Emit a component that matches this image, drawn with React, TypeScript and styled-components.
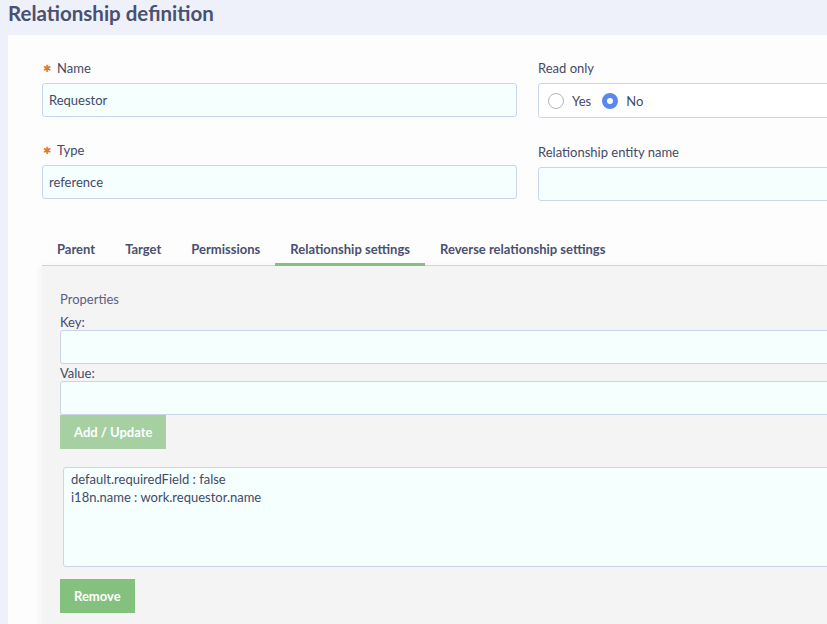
import React from 'react'
import styled, { createGlobalStyle } from 'styled-components'

const GlobalStyle = createGlobalStyle`
  body {
    margin: 0;
    background: #eef1f9;
    font-family: Lato, "Noto Sans", sans-serif;
    color: #434a67;
    overflow: hidden;
  }
`

const tabs = [
  'Parent',
  'Target',
  'Permissions',
  'Relationship settings',
  'Reverse relationship settings',
]

const properties = [
  'default.requiredField : false',
  'i18n.name : work.requestor.name',
]

export default function App() {
  return (
    <>
      <GlobalStyle />
      <Title>Relationship definition</Title>
      <Panel>
        <FormGrid>
          <Field>
            <Label required>Name</Label>
            <Input defaultValue="Requestor" />
          </Field>
          <Field>
            <Label>Read only</Label>
            <RadioGroup>
              <RadioOption>
                <Radio />
                Yes
              </RadioOption>
              <RadioOption>
                <Radio checked />
                No
              </RadioOption>
            </RadioGroup>
          </Field>
          <Field>
            <Label required>Type</Label>
            <Input defaultValue="reference" />
          </Field>
          <Field offset>
            <Label>Relationship entity name</Label>
            <Input />
          </Field>
        </FormGrid>

        <TabBar>
          {tabs.map((t) => (
            <Tab key={t} active={t === 'Relationship settings'}>
              {t}
            </Tab>
          ))}
        </TabBar>

        <TabContent>
          <SectionTitle>Properties</SectionTitle>
          <SmallLabel>Key:</SmallLabel>
          <WideInput />
          <SmallLabel>Value:</SmallLabel>
          <WideInput />
          <Button disabled>Add / Update</Button>
          <ListBox>
            {properties.map((p) => (
              <div key={p}>{p}</div>
            ))}
          </ListBox>
          <Button>Remove</Button>
        </TabContent>
      </Panel>
    </>
  )
}

const Title = styled.h1`
  margin: 0;
  height: 35px;
  box-sizing: border-box;
  padding: 0 8px;
  font-size: 20.5px;
  font-weight: 700;
  line-height: 26px;
  color: #4a5070;
`
const Panel = styled.div`
  margin-left: 8px;
  background: #fdfdfd;
  padding: 25px 0 0 34px;
  height: 589px;
  box-sizing: border-box;
  overflow: hidden;
`
const FormGrid = styled.div`
  display: grid;
  grid-template-columns: 475px 480px;
  column-gap: 21px;
  row-gap: 24px;
`
const Field = styled.div<{ offset?: boolean }>`
  display: flex;
  flex-direction: column;
  padding-top: ${(p) => (p.offset ? '2px' : '0')};
`
const Label = styled.label<{ required?: boolean }>`
  font-size: 13px;
  line-height: 16px;
  margin-bottom: 7px;
  color: #434a67;
  ${(p) =>
    p.required &&
    `
    &::before {
      content: '✱';
      color: #e0792f;
      font-size: 10px;
      margin-left: 1px;
      margin-right: 6px;
      vertical-align: 1px;
    }
  `}
`
const Input = styled.input`
  height: 34px;
  box-sizing: border-box;
  border: 1px solid #c9d5ea;
  border-radius: 3px;
  background: #f5fffe;
  padding: 0 6px;
  font: inherit;
  font-size: 13px;
  color: #434a67;
  outline: none;
`
const RadioGroup = styled.div`
  height: 35px;
  box-sizing: border-box;
  border: 1px solid #c9d5ea;
  border-radius: 3px;
  background: #fff;
  display: flex;
  align-items: center;
  gap: 11px;
  padding-left: 9px;
`
const RadioOption = styled.span`
  display: flex;
  align-items: center;
  gap: 8px;
  font-size: 13px;
`
const Radio = styled.span<{ checked?: boolean }>`
  width: 16px;
  height: 16px;
  border-radius: 50%;
  box-sizing: border-box;
  border: ${(p) => (p.checked ? '5px solid #5a87f0' : '1px solid #b5b5b5')};
  background: #fff;
`
const TabBar = styled.div`
  display: flex;
  margin-top: 29px;
  border-bottom: 1px solid #cfd8e6;
`
const Tab = styled.div<{ active?: boolean }>`
  padding: 11px 15px 0;
  height: 36px;
  box-sizing: border-box;
  font-size: 13px;
  font-weight: 700;
  color: #4a5070;
  white-space: nowrap;
  border-bottom: 3px solid ${(p) => (p.active ? '#84c17f' : 'transparent')};
  margin-bottom: -1px;
`
const TabContent = styled.div`
  background: #f4f4f4;
  padding: 25px 0 20px 18px;
  box-shadow: -3px 0 6px rgba(0, 0, 0, 0.04);
  display: flex;
  flex-direction: column;
  align-items: flex-start;
`
const SectionTitle = styled.div`
  font-size: 13px;
  line-height: 16px;
  color: #5a6182;
  margin-bottom: 6px;
`
const SmallLabel = styled.div`
  font-size: 13px;
  line-height: 16px;
  color: #434a67;
  margin-top: 1px;
`
const WideInput = styled(Input)`
  width: 800px;
  height: 34px;
`
const Button = styled.button`
  height: 34px;
  border: none;
  border-radius: 0;
  padding: 0 14px;
  font: inherit;
  font-size: 13px;
  font-weight: 700;
  color: #fff;
  background: #84c17f;
  &:disabled {
    background: #a6d0a1;
  }
`
const ListBox = styled.div`
  width: 800px;
  height: 100px;
  box-sizing: border-box;
  margin: 18px 0 12px 3px;
  padding: 2px 7px;
  border: 1px solid #c9d5ea;
  border-radius: 3px;
  background: #f5fffe;
  font-size: 13px;
  line-height: 18px;
  color: #434a67;
`
